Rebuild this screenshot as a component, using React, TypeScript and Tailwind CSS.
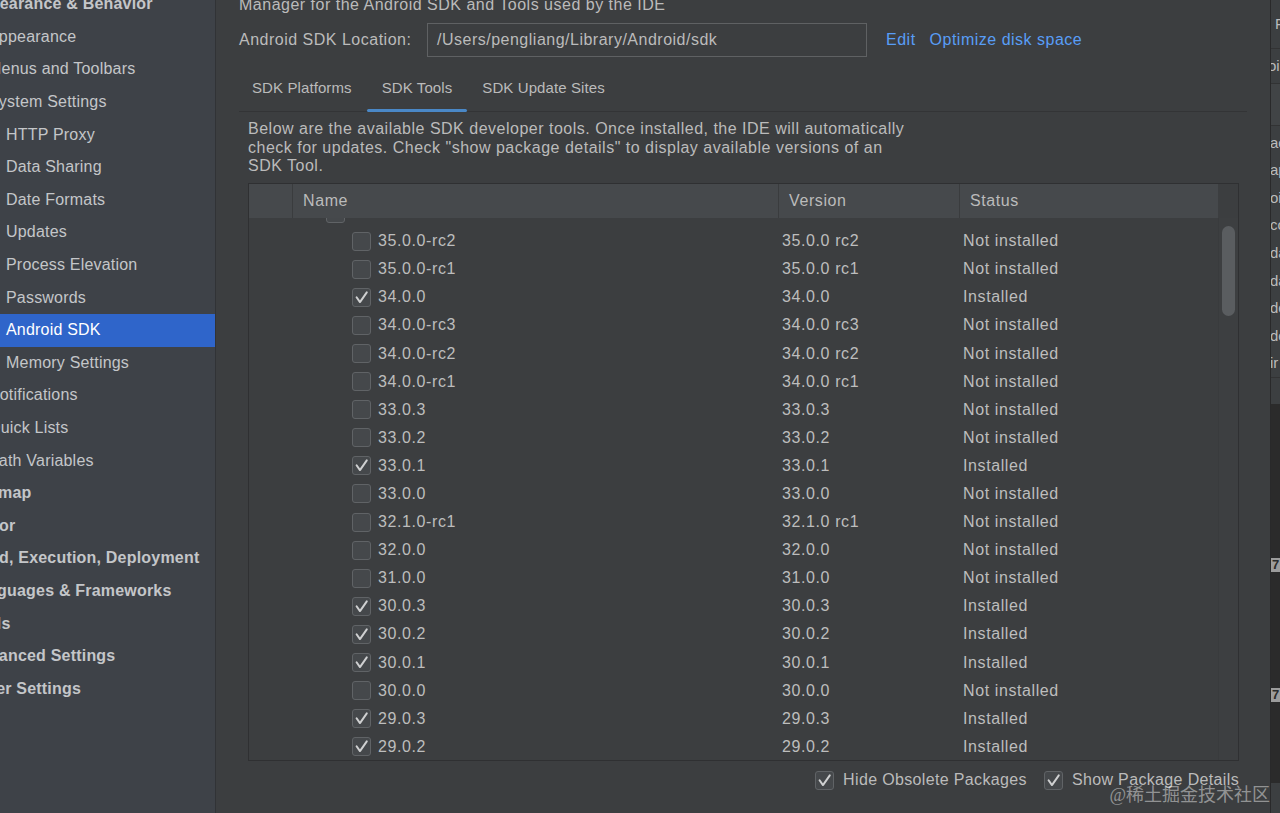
import React from "react"

type NavItem = { label: string; level: 0 | 1 | 2; selected?: boolean }

const nav: NavItem[] = [
    { label: "Appearance & Behavior", level: 0 },
    { label: "Appearance", level: 1 },
    { label: "Menus and Toolbars", level: 1 },
    { label: "System Settings", level: 1 },
    { label: "HTTP Proxy", level: 2 },
    { label: "Data Sharing", level: 2 },
    { label: "Date Formats", level: 2 },
    { label: "Updates", level: 2 },
    { label: "Process Elevation", level: 2 },
    { label: "Passwords", level: 2 },
    { label: "Android SDK", level: 2, selected: true },
    { label: "Memory Settings", level: 2 },
    { label: "Notifications", level: 1 },
    { label: "Quick Lists", level: 1 },
    { label: "Path Variables", level: 1 },
    { label: "Keymap", level: 0 },
    { label: "Editor", level: 0 },
    { label: "Build, Execution, Deployment", level: 0 },
    { label: "Languages & Frameworks", level: 0 },
    { label: "Tools", level: 0 },
    { label: "Advanced Settings", level: 0 },
    { label: "Other Settings", level: 0 },
]

type Tool = { name: string; version: string; installed: boolean }

const tools: Tool[] = [
    { name: "35.0.0-rc2", version: "35.0.0 rc2", installed: false },
    { name: "35.0.0-rc1", version: "35.0.0 rc1", installed: false },
    { name: "34.0.0", version: "34.0.0", installed: true },
    { name: "34.0.0-rc3", version: "34.0.0 rc3", installed: false },
    { name: "34.0.0-rc2", version: "34.0.0 rc2", installed: false },
    { name: "34.0.0-rc1", version: "34.0.0 rc1", installed: false },
    { name: "33.0.3", version: "33.0.3", installed: false },
    { name: "33.0.2", version: "33.0.2", installed: false },
    { name: "33.0.1", version: "33.0.1", installed: true },
    { name: "33.0.0", version: "33.0.0", installed: false },
    { name: "32.1.0-rc1", version: "32.1.0 rc1", installed: false },
    { name: "32.0.0", version: "32.0.0", installed: false },
    { name: "31.0.0", version: "31.0.0", installed: false },
    { name: "30.0.3", version: "30.0.3", installed: true },
    { name: "30.0.2", version: "30.0.2", installed: true },
    { name: "30.0.1", version: "30.0.1", installed: true },
    { name: "30.0.0", version: "30.0.0", installed: false },
    { name: "29.0.3", version: "29.0.3", installed: true },
    { name: "29.0.2", version: "29.0.2", installed: true },
]

function CheckBox({ checked }: { checked?: boolean }) {
    return (
        <span className="w-[19px] h-[19px] shrink-0 rounded-[3px] border border-[#606366] bg-[#45484b] flex items-center justify-center">
            {checked && (
                <svg width="19" height="19" viewBox="0 0 19 19" fill="none">
                    <path d="M4 9.2 L7.8 14.6 L15.4 3.8" stroke="#cfd0d1" strokeWidth="2.2" strokeLinecap="round" strokeLinejoin="round" />
                </svg>
            )}
        </span>
    )
}

function Sidebar() {
    return (
        <aside className="w-[216px] shrink-0 bg-[#3e4248] border-r border-[#313336] overflow-hidden">
            <div className="-mt-[12px] flex flex-col">
                {nav.map((item, i) => (
                    <div
                        key={i}
                        className={
                            "h-[32.6px] flex items-center whitespace-nowrap text-[16px] tracking-[0.2px] " +
                            (item.selected ? "bg-[#2f65ca] text-white " : "text-[#c4c6c9] ") +
                            (item.level === 0 ? "font-bold" : "")
                        }
                    >
                        <span
                            className={
                                item.level === 0 ? "-ml-[32px]" : item.level === 1 ? "-ml-[12px]" : "ml-[6px]"
                            }
                        >
                            {item.label}
                        </span>
                    </div>
                ))}
            </div>
        </aside>
    )
}

function ToolsTable() {
    return (
        <div className="ml-[9px] mt-[7.5px] w-[991px] h-[578px] border border-[#2f3032] flex flex-col tracking-[0.6px]">
            <div className="h-[34px] shrink-0 flex text-[16px] text-[#bbbbbb]">
                <div className="w-[44px] bg-[#46494c] border-r border-[#3a3c3e]" />
                <div className="w-[486px] bg-[#46494c] border-r border-[#3a3c3e] flex items-center pl-[10px]">Name</div>
                <div className="w-[181px] bg-[#46494c] border-r border-[#3a3c3e] flex items-center pl-[10px]">Version</div>
                <div className="w-[258px] bg-[#46494c] flex items-center pl-[10px]">Status</div>
                <div className="flex-1" />
            </div>
            <div className="flex-1 flex overflow-hidden">
                <div className="w-[969px] overflow-hidden">
                    <div className="-mt-[19px] flex flex-col text-[16px] text-[#bdbdbd]">
                        <div className="h-[28.1px] flex items-center">
                            <div className="w-[44px]" />
                            <div className="w-[486px] flex items-center gap-[7px] pl-[33px] whitespace-nowrap">
                                <CheckBox />
                                <span>Android SDK Build-Tools 35-rc2</span>
                            </div>
                        </div>
                        {tools.map((t) => (
                            <div key={t.name} className="h-[28.1px] flex items-center whitespace-nowrap">
                                <div className="w-[44px]" />
                                <div className="w-[486px] flex items-center gap-[7px] pl-[59px]">
                                    <CheckBox checked={t.installed} />
                                    <span>{t.name}</span>
                                </div>
                                <div className="w-[181px] pl-[3px]">{t.version}</div>
                                <div className="w-[258px] pl-[3px]">{t.installed ? "Installed" : "Not installed"}</div>
                            </div>
                        ))}
                    </div>
                </div>
                <div className="w-[20px] border-l border-[#393b3d] bg-[#3d3f41]">
                    <div className="ml-[3px] mt-[8px] w-[13px] h-[90px] rounded-full bg-[#5a5d60]" />
                </div>
            </div>
        </div>
    )
}

function MainPanel() {
    const tabs = ["SDK Platforms", "SDK Tools", "SDK Update Sites"]
    return (
        <main className="flex-1 bg-[#3c3e40] text-[#bbbbbb] overflow-hidden pl-[23px] pr-[23px] flex flex-col text-[16px] tracking-[0.5px]">
            <div className="-mt-[4px] h-[18px] leading-[18px] whitespace-nowrap">
                Manager for the Android SDK and Tools used by the IDE
            </div>
            <div className="mt-[9px] h-[34px] flex items-center whitespace-nowrap">
                <span className="w-[188px]">Android SDK Location:</span>
                <div className="w-[440px] h-[34px] border border-[#5f6163] bg-[#3c3e40] flex items-center pl-[9px]">
                    /Users/pengliang/Library/Android/sdk
                </div>
                <span className="ml-[19px] text-[#589df6]">Edit</span>
                <span className="ml-[14px] text-[#589df6]">Optimize disk space</span>
            </div>
            <div className="mt-[9px] h-[46px] flex border-b border-[#333436] text-[15px] tracking-[0.1px]">
                {tabs.map((tab, i) => (
                    <div
                        key={tab}
                        className={"relative h-[45px] px-[15px] flex items-center whitespace-nowrap " + (i === 0 ? "-ml-[2px]" : "")}
                    >
                        {tab}
                        {tab === "SDK Tools" && (
                            <span className="absolute left-0 right-0 bottom-[-1px] h-[3px] rounded-full bg-[#4a88c7]" />
                        )}
                    </div>
                ))}
            </div>
            <p className="mt-[8px] ml-[9px] leading-[18.5px] whitespace-nowrap">
                Below are the available SDK developer tools. Once installed, the IDE will automatically
                <br />
                check for updates. Check "show package details" to display available versions of an
                <br />
                SDK Tool.
            </p>
            <ToolsTable />
            <div className="mt-[9px] w-[1000px] h-[20px] flex items-center justify-end gap-[9px] whitespace-nowrap tracking-[0.35px]">
                <CheckBox checked />
                <span className="mr-[8px]">Hide Obsolete Packages</span>
                <CheckBox checked />
                <span>Show Package Details</span>
            </div>
        </main>
    )
}

function BehindWindow() {
    const frags = ["ac", "ap", "oi", "cc", "da", "da", "de", "de", "ir"]
    return (
        <div className="w-[10px] shrink-0 border-l border-[#29292a] flex flex-col overflow-hidden text-[15px] text-[#bbbbbb] whitespace-nowrap">
            <div className="h-[49px] shrink-0 bg-[#3c3f41] border-b border-[#323334] flex items-center pl-[4px]">F</div>
            <div className="h-[35px] shrink-0 bg-[#3c3f41] border-b border-[#323334] flex items-center -ml-[3px]">oi</div>
            <div className="h-[42px] shrink-0 bg-[#414446] border-b border-[#323334]" />
            <div className="shrink-0 bg-[#3c3f41] pt-[3px] border-b border-[#323334]">
                {frags.map((f, i) => (
                    <div key={i} className="h-[27.6px] flex items-center -ml-[1px]">{f}</div>
                ))}
            </div>
            <div className="h-[26px] shrink-0 bg-[#3c3f41]" />
            <div className="h-[379px] shrink-0 bg-[#2b2b2b] flex flex-col">
                <div className="h-[154px]" />
                <div className="h-[14px] bg-[#9c9c9c] text-[#2b2b2b] text-[13px] leading-[14px] font-bold pl-[1px]">7</div>
                <div className="h-[116px]" />
                <div className="h-[14px] bg-[#9c9c9c] text-[#2b2b2b] text-[13px] leading-[14px] font-bold pl-[1px]">7</div>
            </div>
            <div className="flex-1 bg-[#3c3f41]" />
        </div>
    )
}

export default function App() {
    return (
        <div className="relative w-[1280px] h-[813px] overflow-hidden flex bg-[#3c3e40] font-['Liberation_Sans',Arial,sans-serif]">
            <Sidebar />
            <MainPanel />
            <BehindWindow />
            <span className="absolute right-[10px] bottom-[8px] text-[18px] leading-[20px] text-white/45 font-['Liberation_Serif','Noto_Sans_CJK_SC',serif] whitespace-nowrap">
                @稀土掘金技术社区
            </span>
        </div>
    )
}
